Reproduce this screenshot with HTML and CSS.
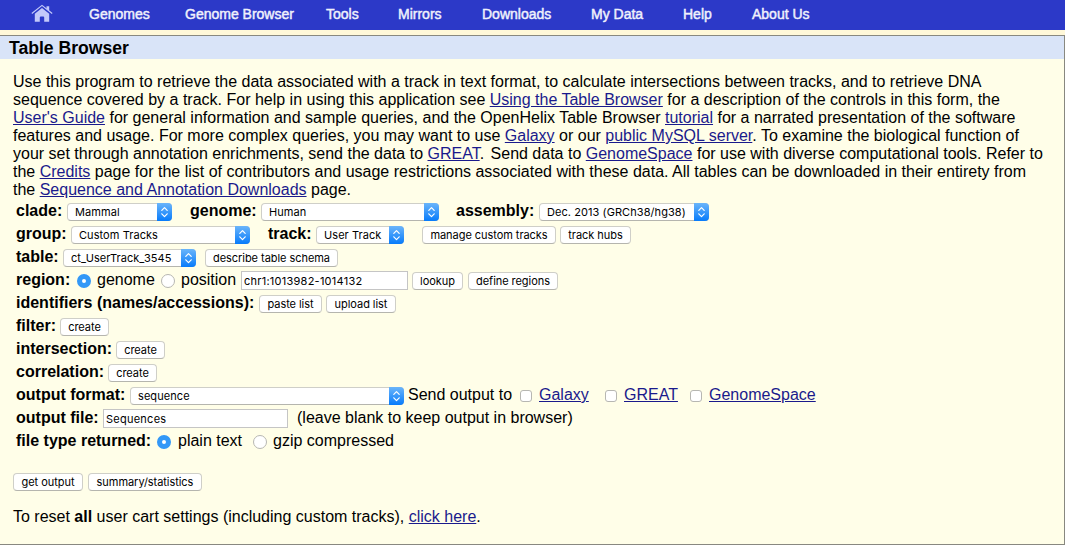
FILE: index.html
```
<!DOCTYPE html>
<html lang="en">
<head>
<meta charset="utf-8">
<title>Table Browser</title>
<link rel="stylesheet" href="styles.css">
</head>
<body>
<svg class="defs" width="0" height="0"><defs>
<linearGradient id="blue" x1="0" y1="0" x2="0" y2="1"><stop offset="0" stop-color="#6bb5fa"/><stop offset="1" stop-color="#077bfb"/></linearGradient>
<symbol id="arrows" viewBox="0 0 15 18"><path d="M0 0H11a4 4 0 0 1 4 4V14a4 4 0 0 1-4 4H0z" fill="url(#blue)"/><path d="M4.8 7.4 7.5 4.6l2.7 2.8M4.8 10.8l2.7 2.8 2.7-2.8" fill="none" stroke="#fff" stroke-width="1.2" stroke-linecap="round" stroke-linejoin="round"/></symbol>
</defs></svg>
<nav class="menu">
<a class="home" aria-label="Home"><svg width="22" height="19" viewBox="0 0 22 19"><path d="M.8 9.5 11 1.4l10.2 8.1" fill="none" stroke="#c3c9fa" stroke-width="1.2"/><path d="M15.5 2.2h2.7v4.6l-2.7-2.1z" fill="#c3c9fa"/><path d="M11 4 18.2 9.8v8h-5v-4.4a1 1 0 0 0-1-1H9.8a1 1 0 0 0-1 1v4.4h-5v-8z" fill="#c3c9fa"/></svg></a>
<a class="m1">Genomes</a><a class="m2">Genome Browser</a><a class="m3">Tools</a><a class="m4">Mirrors</a><a class="m5">Downloads</a><a class="m6">My Data</a><a class="m7">Help</a><a>About Us</a>
</nav>
<main class="panel">
<h1>Table Browser</h1>
<p class="intro">Use this program to retrieve the data associated with a track in text format, to calculate intersections between tracks, and to retrieve DNA<br>
sequence covered by a track. For help in using this application see <a>Using the Table Browser</a> for a description of the controls in this form, the<br>
<a>User's Guide</a> for general information and sample queries, and the OpenHelix Table Browser <a>tutorial</a> for a narrated presentation of the software<br>
features and usage. For more complex queries, you may want to use <a>Galaxy</a> or our <a>public MySQL server</a>. To examine the biological function of<br>
your set through annotation enrichments, send the data to <a>GREAT</a><span class="stop">.</span> Send data to <a>GenomeSpace</a> for use with diverse computational tools. Refer to<br>
the <a>Credits</a> page for the list of contributors and usage restrictions associated with these data. All tables can be downloaded in their entirety from<br>
the <a>Sequence and Annotation Downloads</a> page.</p>
<form class="form">
<div class="row"><b class="l-clade">clade:</b><span class="select s-clade">Mammal<svg><use href="#arrows"/></svg></span><b class="l-genome">genome:</b><span class="select s-genome">Human<svg><use href="#arrows"/></svg></span><b class="l-assembly">assembly:</b><span class="select s-assembly">Dec. 2013 (GRCh38/hg38)<svg><use href="#arrows"/></svg></span></div>
<div class="row"><b class="l-group">group:</b><span class="select s-group">Custom Tracks<svg><use href="#arrows"/></svg></span><b class="l-track">track:</b><span class="select s-track">User Track<svg><use href="#arrows"/></svg></span><button type="button" class="b-manage">manage custom tracks</button><button type="button" class="b-hubs">track hubs</button></div>
<div class="row"><b class="l-table">table:</b><span class="select s-table">ct_UserTrack_3545<svg><use href="#arrows"/></svg></span><button type="button" class="b-schema">describe table schema</button></div>
<div class="row"><b class="l-region">region:</b><i class="radio on"></i><span class="t-genome">genome</span><i class="radio"></i><span class="t-position">position</span><input class="i-position" value="chr1:1013982-1014132"><button type="button" class="b-lookup">lookup</button><button type="button" class="b-define">define regions</button></div>
<div class="row"><b class="l-ids">identifiers (names/accessions):</b><button type="button" class="b-paste">paste list</button><button type="button" class="b-upload">upload list</button></div>
<div class="row"><b class="l-filter">filter:</b><button type="button" class="b-create">create</button></div>
<div class="row"><b class="l-inter">intersection:</b><button type="button" class="b-create">create</button></div>
<div class="row"><b class="l-corr">correlation:</b><button type="button" class="b-create">create</button></div>
<div class="row"><b class="l-format">output format:</b><span class="select s-format">sequence<svg><use href="#arrows"/></svg></span><span class="t-send">Send output to</span><i class="check"></i><span class="t-galaxy"><a>Galaxy</a></span><i class="check"></i><span class="t-great"><a>GREAT</a></span><i class="check"></i><a>GenomeSpace</a></div>
<div class="row"><b class="l-file">output file:</b><input class="i-file" value="Sequences"><span class="t-leave">(leave blank to keep output in browser)</span></div>
<div class="row"><b class="l-type">file type returned:</b><i class="radio on"></i><span class="t-plain">plain text</span><i class="radio"></i><span class="t-gzip">gzip compressed</span></div>
</form>
<div class="actions"><button type="button" class="b-get">get output</button><button type="button" class="b-summary">summary/statistics</button></div>
<p class="reset">To reset <b>all</b> user cart settings (including custom tracks), <a>click here</a>.</p>
</main>
</body>
</html>
```
FILE: styles.css
```
* { box-sizing: border-box; }
body { margin: 0; height: 545px; overflow: hidden; background: #fff8d9; color: #000; font: 16px/18px "Liberation Sans", Arial, sans-serif; }
.defs { display: block; }
.menu { display: flex; height: 30px; background: #2c39c8; color: #f0f1fc; font-size: 14px; line-height: 29px; white-space: nowrap; -webkit-text-stroke: .45px #f0f1fc; }
.home { width: 89px; padding: 4px 0 0 31px; line-height: 0; }
.home svg { -webkit-text-stroke: 0; }
.m1 { width: 96px; } .m2 { width: 141px; } .m3 { width: 72px; } .m4 { width: 84px; }
.m5 { width: 109px; } .m6 { width: 92px; } .m7 { width: 69px; }
.panel { height: 510px; margin-top: 5px; border: 1px solid #888880; border-left: 0; background: #fffee8; }
h1 { margin: 0; height: 23px; padding-left: 9px; background: #d9e4f8; font-size: 17.6px; line-height: 24px; }
p { margin: 0; white-space: nowrap; }
.intro { padding: 14px 0 0 13px; }
.stop { margin-right: 2px; }
p a, .row a { color: #1a1a8c; text-decoration: underline; }
.form { padding: 0 0 0 16px; margin-top: 1px; }
.row { display: flex; align-items: flex-start; height: 23px; white-space: nowrap; line-height: 22px; }
.row > * { flex: none; }
.select, button, input { font: 11px/16px Inter, sans-serif; letter-spacing: .07px; color: #000; background: #fff; }
.select, .row button { margin-top: 3px; }
.select, button { height: 18px; border: 1px solid #cfcfc8; border-bottom-color: #b5b5ae; border-radius: 4px; }
button { padding: 0; text-align: center; line-height: 16px; letter-spacing: -.05px; }
.select { display: flex; justify-content: space-between; padding-left: 7px; line-height: 17px; }
.select svg { width: 15px; height: 18px; margin: -1px -1px 0 0; }
input { height: 19px; margin: 2px 0 0; padding: 1px 2px 0; border: 1px solid #c5c5c5; border-radius: 0; letter-spacing: .25px; }
.radio { width: 14px; height: 14px; margin-top: 5px; border: 1px solid #b7b7b2; border-radius: 50%; background: #fff; }
.radio.on { border: 5px solid #3398f7; }
.check { width: 12px; height: 12px; margin-top: 6px; border: 1px solid #b7b7b2; border-radius: 3px; background: #fff; }
.l-clade { width: 51px; } .s-clade { width: 105px; }
.l-genome { width: 71px; margin-left: 18px; } .s-genome { width: 178px; }
.l-assembly { width: 83px; margin-left: 17px; } .s-assembly { width: 170px; }
.l-group { width: 55px; } .s-group { width: 179px; }
.l-track { width: 48px; margin-left: 18px; } .s-track { width: 88px; }
.b-manage { width: 134px; margin-left: 18px; } .b-hubs { width: 71px; margin-left: 4px; }
.l-table { width: 47px; } .s-table { width: 133px; }
.b-schema { width: 133px; margin-left: 9px; }
.l-region { width: 61px; } .t-genome { width: 70px; padding-left: 6px; }
.t-position { width: 66px; padding-left: 6px; } .i-position { width: 167px; }
.b-lookup { width: 51px; margin-left: 4px; } .b-define { width: 90px; margin-left: 5px; }
.l-ids { width: 243px; } .b-paste { width: 63px; } .b-upload { width: 70px; margin-left: 4px; }
.l-filter { width: 44px; } .l-inter { width: 100px; } .l-corr { width: 92px; } .b-create { width: 49px; }
.l-format { width: 114px; } .s-format { width: 274px; }
.t-send { width: 116px; padding-left: 4px; }
.t-galaxy { width: 73px; padding-left: 7px; } .t-great { width: 73px; padding-left: 7px; }
.check + a { margin-left: 7px; }
.l-file { width: 87px; } .i-file { width: 185px; } .t-leave { margin-left: 9px; }
.l-type { width: 141px; } .t-plain { width: 82px; padding-left: 7px; } .t-gzip { padding-left: 6px; }
.actions { display: flex; gap: 5px; padding: 20px 0 0 13px; }
.b-get { width: 70px; } .b-summary { width: 114px; }
.reset { padding: 17px 0 0 13px; }
```
